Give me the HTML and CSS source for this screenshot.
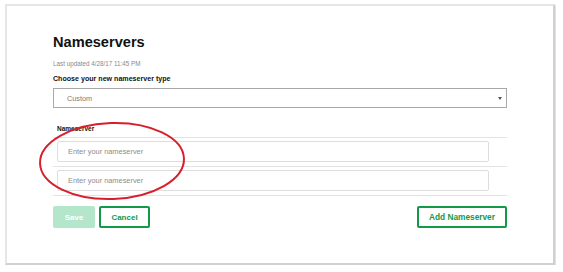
FILE: index.html
```html
<!DOCTYPE html>
<html lang="en">

<head>
    <meta charset="UTF-8">
    <title>Nameservers</title>
    <link rel="stylesheet" href="styles.css">
</head>

<body>
    <div class="card">
        <h1 class="title">Nameservers</h1>
        <p class="updated">Last updated 4/28/17 11:45 PM</p>

        <label class="type-label" for="nsType">Choose your new nameserver type</label>
        <div class="select-box" id="nsType">
            <span>Custom</span>
            <span class="caret"></span>
        </div>

        <div class="ns-label">Nameserver</div>
        <div class="ns-list">
            <div class="ns-row">
                <div class="ns-input">Enter your nameserver</div>
            </div>
            <div class="ns-row">
                <div class="ns-input">Enter your nameserver</div>
            </div>
        </div>

        <div class="actions">
            <button type="button" class="btn btn-save">Save</button>
            <button type="button" class="btn btn-outline">Cancel</button>
            <button type="button" class="btn btn-outline btn-add">Add Nameserver</button>
        </div>

        <svg class="highlight" width="154" height="86" viewBox="0 0 154 86">
            <ellipse cx="76" cy="43" rx="72" ry="38" fill="none" stroke="#d8202c" stroke-width="2"
                transform="rotate(-2 76 43)" />
        </svg>
    </div>
</body>

</html>
```

FILE: styles.css
```css
:root {
    --green: #129a48;
    --green-light: #b3e6ca;
    --text-color: #111111;
    --muted: #8a8a8a;
    --line: #e3e3e3;
}

body {
    margin: 0;
    padding: 4px 0 0 5px;
    background: #ffffff;
    font-family: "Liberation Sans", Arial, sans-serif;
    color: var(--text-color);
}

.card {
    position: relative;
    box-sizing: border-box;
    width: 550px;
    height: 261px;
    padding: 27px 46px 0 46px;
    background: #ffffff;
    border: 2px solid #e6e6e6;
    border-right-color: #d0d0d0;
    border-bottom-color: #d0d0d0;
    box-shadow: 1px 1px 0 #e2e2e2;
    display: flex;
    flex-direction: column;
}

.title {
    margin: 0;
    font-size: 14.6px;
    line-height: 18px;
    font-weight: bold;
}

.updated {
    margin: 9px 0 0;
    font-size: 6.3px;
    line-height: 8px;
    color: var(--muted);
}

.type-label {
    margin-top: 6px;
    font-size: 7.1px;
    line-height: 10px;
    font-weight: bold;
}

.select-box {
    margin-top: 4px;
    box-sizing: border-box;
    height: 20px;
    display: flex;
    align-items: center;
    justify-content: space-between;
    padding: 0 4px 0 13px;
    border: 1px solid #a8a8a8;
    font-size: 7.3px;
    color: #7a7a7a;
}

.caret {
    width: 0;
    height: 0;
    border-left: 2px solid transparent;
    border-right: 2px solid transparent;
    border-top: 3px solid #555555;
}

.ns-label {
    margin: 17px 0 0 4px;
    font-size: 6.5px;
    line-height: 8px;
    font-weight: bold;
}

.ns-list {
    margin-top: 4px;
    border-bottom: 1px solid var(--line);
}

.ns-row {
    border-top: 1px solid var(--line);
    padding: 3px 18px 4px 4px;
}

.ns-input {
    box-sizing: border-box;
    height: 21px;
    display: flex;
    align-items: center;
    padding-left: 10px;
    border: 1px solid #dddddd;
    border-radius: 2px;
    font-size: 7.4px;
    color: #8c8c8c;
}

.actions {
    margin-top: 10px;
    display: flex;
    gap: 4px;
}

.btn {
    box-sizing: border-box;
    height: 22px;
    padding: 0;
    border-radius: 2px;
    font-family: "Liberation Sans", Arial, sans-serif;
    font-weight: bold;
    font-size: 8px;
    cursor: pointer;
}

.btn-save {
    width: 42px;
    border: none;
    background: var(--green-light);
    color: #ffffff;
}

.btn-outline {
    width: 51px;
    border: 2px solid var(--green);
    background: #ffffff;
    color: var(--green);
}

.btn-add {
    width: 90px;
    margin-left: auto;
    font-size: 8.3px;
}

.highlight {
    position: absolute;
    left: 29px;
    top: 112px;
}
```
